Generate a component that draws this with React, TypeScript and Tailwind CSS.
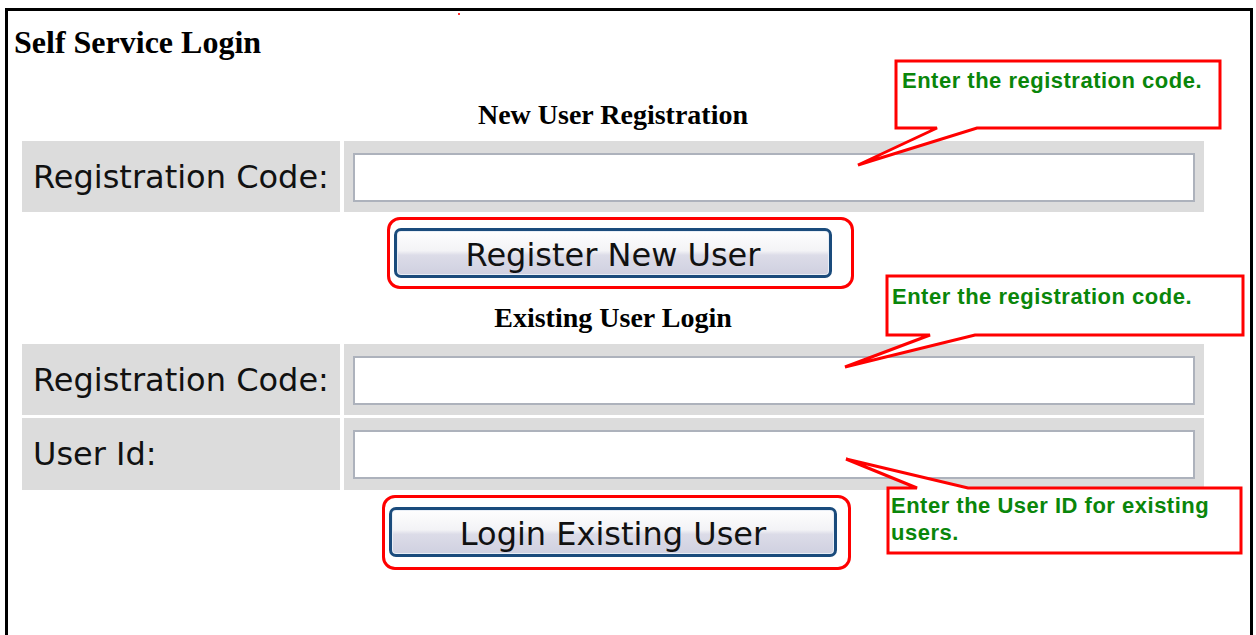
import React from "react";

const serif = "font-['Liberation_Serif','Times_New_Roman',serif]";
const sans = "font-['DejaVu_Sans','Verdana',sans-serif]";
const note = "font-['Liberation_Sans','Arial',sans-serif]";

type FieldRowProps = {
  label: string;
  className?: string;
};

const FieldRow = ({ label, className = "" }: FieldRowProps) => {
  return (
    <div className={`flex gap-[4px] h-[71px] ${className}`}>
      <div
        className={`w-[318px] bg-[#dcdcdc] flex items-center pl-[11px] text-[32px] text-[#111] ${sans}`}
      >
        {label}
      </div>
      <div className="flex-1 bg-[#dcdcdc] pt-[12px] px-[9px]">
        <input
          type="text"
          className="w-full h-[49px] bg-white border-2 border-[#adb2bc] outline-none"
        />
      </div>
    </div>
  );
};

type FormButtonProps = {
  text: string;
  width: string;
  ring: string;
  className?: string;
};

const FormButton = ({ text, width, ring, className = "" }: FormButtonProps) => {
  return (
    <div className={`flex justify-center ${className}`}>
      <div className="relative">
        {/* red annotation ring drawn around the button */}
        <span
          className={`absolute border-[3px] border-[#ff0000] rounded-[13px] pointer-events-none ${ring}`}
        />
        <button
          type="button"
          className={`${width} h-[50px] rounded-[7px] border-[3px] border-[#1a4b7c] bg-[linear-gradient(to_bottom,#fefefe,#f3f3f6_45%,#dcdce8_55%,#cfd0e0)] shadow-[inset_0_0_0_1px_#e8eef6] text-[32px] text-[#111] ${sans}`}
        >
          {text}
        </button>
      </div>
    </div>
  );
};

const Callouts = () => {
  return (
    <>
      <svg
        className="absolute left-0 top-0 pointer-events-none"
        width={1256}
        height={635}
        viewBox="0 0 1256 635"
      >
        <g fill="#ffffff" stroke="#ff0000" strokeWidth={3}>
          <path d="M896 61 H1220 V128 H977 L858 165 L937 128 H896 Z" />
          <path d="M887 276 H1243 V335 H975 L845 367 L930 335 H887 Z" />
          <path d="M888 488 H917 L846 459 L968 488 H1241 V553 H888 Z" />
        </g>
      </svg>
      <p
        className={`absolute left-[902px] top-[67px] text-[22px] leading-[27px] tracking-[0.5px] font-bold text-[#0a860a] ${note}`}
      >
        Enter the registration code.
      </p>
      <p
        className={`absolute left-[892px] top-[283px] text-[22px] leading-[27px] tracking-[0.5px] font-bold text-[#0a860a] ${note}`}
      >
        Enter the registration code.
      </p>
      <p
        className={`absolute left-[891px] top-[492px] w-[345px] text-[22px] leading-[27px] tracking-[0.5px] font-bold text-[#0a860a] ${note}`}
      >
        Enter the User ID for existing users.
      </p>
    </>
  );
};

const App = () => {
  return (
    <div className="relative w-[1256px] h-[635px] overflow-hidden bg-white">
      <span className="absolute left-[458px] top-[13px] w-[2px] h-[2px] bg-[#ff3030]" />
      <div className="ml-[5px] mt-[8px] w-[1248px] h-[700px] border-[3px] border-black">
        <h1 className={`ml-[6px] mt-[13px] text-[32px] leading-[36px] font-bold text-black ${serif}`}>
          Self Service Login
        </h1>
        <div className="ml-[14px] w-[1182px] flex flex-col">
          <h2 className={`mt-[38px] text-center text-[28px] leading-[34px] font-bold text-black ${serif}`}>
            New User Registration
          </h2>
          <FieldRow label="Registration Code:" className="mt-[9px]" />
          <FormButton
            text="Register New User"
            width="w-[438px]"
            ring="-left-[7px] -right-[22px] -top-[11px] -bottom-[11px]"
            className="mt-[16px]"
          />
          <h2 className={`mt-[23px] text-center text-[28px] leading-[34px] font-bold text-black ${serif}`}>
            Existing User Login
          </h2>
          <FieldRow label="Registration Code:" className="mt-[9px]" />
          <FieldRow label="User Id:" className="mt-[3px] h-[72px]" />
          <FormButton
            text="Login Existing User"
            width="w-[448px]"
            ring="-left-[7px] -right-[14px] -top-[12px] -bottom-[13px]"
            className="mt-[17px]"
          />
        </div>
      </div>
      <Callouts />
    </div>
  );
};

export default App;
